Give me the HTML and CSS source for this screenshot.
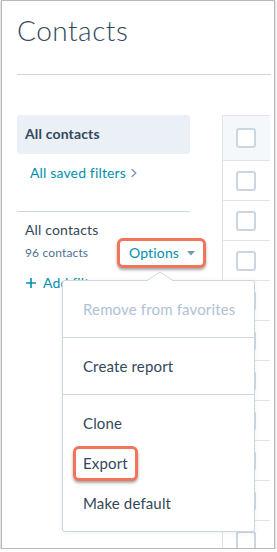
FILE: index.html
```
<!DOCTYPE html>
<html lang="en">
<head>
    <meta charset="UTF-8">
    <meta name="viewport" content="width=device-width, initial-scale=1.0">
    <title>Contacts</title>
    <link rel="stylesheet" href="styles.css">
</head>
<body>
    <div class="window">
        <header class="page-header">
            <h1>Contacts</h1>
        </header>

        <div class="content">
            <aside class="sidebar">
                <div class="view active">All contacts</div>
                <a class="saved-link" href="#">All saved filters
                    <svg class="chevron" width="6" height="10" viewBox="0 0 6 10"><path d="M1 1.5 L4.8 5 L1 8.5" fill="none" stroke="#7c98b6" stroke-width="1.4" stroke-linecap="round" stroke-linejoin="round"/></svg>
                </a>

                <div class="current-view">
                    <div class="view-name">All contacts</div>
                    <div class="view-meta">
                        <span class="count">96 contacts</span>
                        <span class="callout">
                            <a class="options" href="#">Options
                                <svg class="caret" width="8" height="5" viewBox="0 0 8 5"><path d="M0 0 H8 L4 4.5 Z" fill="#6b9db4"/></svg>
                            </a>
                        </span>
                    </div>
                    <a class="add-filter" href="#">
                        <svg class="plus" width="10" height="10" viewBox="0 0 10 10"><path d="M5 0 V10 M0 5 H10" stroke="#0091ae" stroke-width="1.6"/></svg>
                        Add filter
                    </a>
                </div>
            </aside>

            <div class="table-col">
                <div class="cell head"><span class="checkbox"></span></div>
                <div class="cell"><span class="checkbox"></span></div>
                <div class="cell"><span class="checkbox"></span></div>
                <div class="cell"><span class="checkbox"></span></div>
                <div class="cell"><span class="checkbox"></span></div>
                <div class="cell"><span class="checkbox"></span></div>
                <div class="cell"><span class="checkbox"></span></div>
                <div class="cell"><span class="checkbox"></span></div>
                <div class="cell"><span class="checkbox"></span></div>
                <div class="cell"><span class="checkbox"></span></div>
                <div class="cell"><span class="checkbox"></span></div>
            </div>
        </div>

        <!-- menu opened from "Options" -->
        <div class="dropdown">
            <svg class="dropdown-arrow" width="26" height="10" viewBox="0 0 26 10"><polygon points="0,10 13,1 26,10" fill="#fff"/><polyline points="0,9.5 13,1 26,9.5" fill="none" stroke="#cbd6e2" stroke-width="1"/></svg>
            <div class="menu-section">
                <div class="menu-item disabled">Remove from favorites</div>
            </div>
            <div class="menu-section">
                <div class="menu-item">Create report</div>
            </div>
            <div class="menu-section">
                <div class="menu-item">Clone</div>
                <div class="menu-item"><span class="callout callout-item">Export</span></div>
                <div class="menu-item">Make default</div>
            </div>
        </div>
    </div>
</body>
</html>
```

FILE: styles.css
```
body {
    margin: 0;
    background: #ffffff;
    font-family: Lato, 'Open Sans', sans-serif;
    letter-spacing: 0.15px;
    color: #33475b;
}
a {
    text-decoration: none;
}
.window {
    position: relative;
    margin-left: 1px;
    width: 272px;
    height: 547px;
    border: 1px solid #b9b9b9;
    box-shadow: 0 1px 2px rgba(0, 0, 0, 0.35);
    background: #ffffff;
    overflow: hidden;
}
.page-header {
    margin: 0 3px 0 15px;
    padding: 12px 0 27px;
    border-bottom: 1px solid #cbd6e2;
}
h1 {
    margin: 0;
    font-size: 28px;
    line-height: 34px;
    font-weight: 300;
    letter-spacing: 0.5px;
    color: #33475b;
}
.content {
    display: flex;
    gap: 32px;
    padding: 40px 3px 0 15px;
}
.sidebar {
    width: 173px;
    flex-shrink: 0;
    font-size: 14px;
}
.view.active {
    height: 39px;
    line-height: 37px;
    padding: 0 8px;
    background: #eaf0f6;
    border-radius: 3px;
    font-weight: 700;
}
.saved-link {
    display: flex;
    align-items: center;
    gap: 5px;
    margin-top: 9px;
    padding-left: 13px;
    line-height: 20px;
    color: #0091ae;
}
.current-view {
    margin-top: 28px;
    padding: 8px 0 0 8px;
    border-top: 1px solid #cbd6e2;
}
.view-name {
    line-height: 20px;
}
.view-meta {
    display: flex;
    align-items: center;
    margin-top: -2px;
}
.count {
    width: 92px;
    flex-shrink: 0;
    font-size: 12px;
    line-height: 16px;
    color: #516f90;
}
.callout {
    border: 3px solid #f2745a;
    border-radius: 6px;
    box-shadow: 0 2px 3px rgba(0, 0, 0, 0.35);
    background: #ffffff;
}
.options {
    display: flex;
    align-items: center;
    gap: 8px;
    padding: 0 8px 0 9px;
    line-height: 24px;
    color: #0091ae;
    white-space: nowrap;
}
.add-filter {
    display: flex;
    align-items: center;
    margin-top: 5px;
    padding-left: 1px;
    line-height: 20px;
    color: #0091ae;
}
.plus {
    margin-right: 7px;
}
.table-col {
    width: 47px;
    flex-shrink: 0;
    border-left: 1px solid #dfe3eb;
    height: 600px;
}
.cell {
    display: flex;
    align-items: center;
    height: 39px;
    padding-left: 13px;
    border-bottom: 1px solid #dfe3eb;
}
.cell.head {
    height: 44px;
    background: #f5f8fa;
    border-top: 1px solid #dfe3eb;
}
.checkbox {
    width: 16px;
    height: 16px;
    border: 2px solid #cbd6e2;
    border-radius: 3px;
    background: #ffffff;
}
.dropdown {
    position: absolute;
    left: 60px;
    top: 279px;
    width: 191px;
    background: #ffffff;
    border: 1px solid #cbd6e2;
    border-radius: 3px;
    box-shadow: 0 1px 6px rgba(45, 62, 80, 0.08);
}
.dropdown-arrow {
    position: absolute;
    left: 84px;
    top: -10px;
}
.menu-section {
    padding: 8px 0;
}
.menu-section + .menu-section {
    border-top: 1px solid #cbd6e2;
}
.menu-item {
    display: flex;
    align-items: center;
    height: 40px;
    padding-left: 20px;
    font-size: 15px;
    color: #33475b;
}
.menu-item.disabled {
    color: #b0c1d4;
}
.callout-item {
    margin-left: -10px;
    padding: 0 7px;
    line-height: 29px;
}
```
